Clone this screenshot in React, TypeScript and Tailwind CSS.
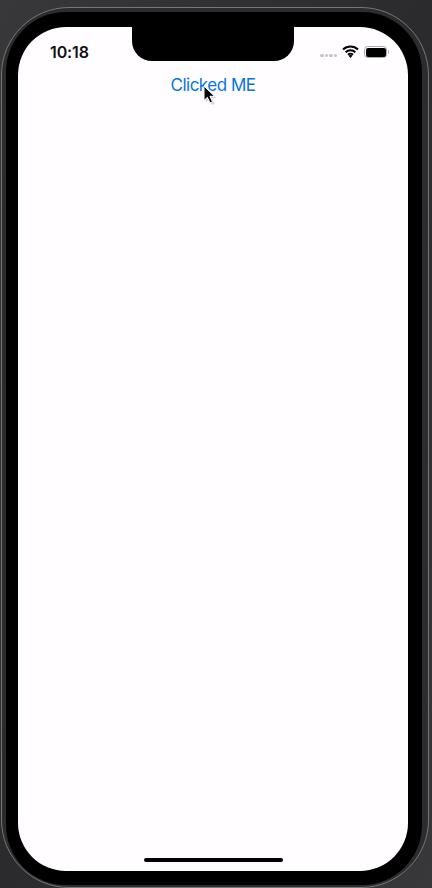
export default function App() {
  return (
    <div className="w-[432px] h-[888px] overflow-hidden bg-gradient-to-br from-[#38383a] via-[#2b2b2d] to-[#38383a] pt-[7px] pl-[1px]" style={{ fontFamily: "Inter, 'Liberation Sans', sans-serif" }}>
      <div className="w-[428px] h-[881px] rounded-[68px] border border-[#77777b] bg-[#2c2c2e] pt-[4px] pl-[4px] pr-[6px] pb-[1px]">
        <div className="w-[416px] h-[873px] rounded-[60px] bg-black pt-[15px] pl-[12px]">
          <div className="relative w-[390px] h-[844px] rounded-[48px] bg-[#fffdff] overflow-hidden flex flex-col items-center">
            <div className="absolute left-[114px] top-0 w-[162px] h-[34px] bg-black rounded-b-[20px]" />
            <div className="w-full h-[44px] shrink-0 flex items-center justify-between pl-[32px] pr-[19px] pt-[6px]">
              <span className="text-[16px] leading-[20px] font-semibold text-[#111] tracking-[-0.1px]">10:18</span>
              <div className="flex items-center gap-[5px]">
                <div className="flex gap-[1px] mt-[7px]">
                  <span className="w-[3.5px] h-[3.5px] rounded-full bg-[#c4c4c6]" />
                  <span className="w-[3.5px] h-[3.5px] rounded-full bg-[#c4c4c6]" />
                  <span className="w-[3.5px] h-[3.5px] rounded-full bg-[#c4c4c6]" />
                  <span className="w-[3.5px] h-[3.5px] rounded-full bg-[#c4c4c6]" />
                </div>
                <svg width="17" height="13" viewBox="0 0 16 12" className="-mt-[1px]">
                  <path d="M1 4.2a10 10 0 0 1 14 0M3.4 6.7a6.6 6.6 0 0 1 9.2 0M5.7 9a3.3 3.3 0 0 1 4.6 0" fill="none" stroke="#000" strokeWidth="1.9" />
                  <path d="M8 12l-1.8-2a2.5 2.5 0 0 1 3.6 0z" fill="#000" />
                </svg>
                <div className="flex items-center">
                  <div className="w-[23px] h-[12px] rounded-[3.5px] border-[1.5px] border-[#aaaaac] p-[0.5px]">
                    <div className="w-full h-full rounded-[2px] bg-black" />
                  </div>
                  <span className="w-[1.5px] h-[4px] rounded-r-full bg-[#aaaaac] ml-[0.5px]" />
                </div>
              </div>
            </div>
            <div className="relative mt-[3px]">
              <span className="block text-[17px] leading-[22px] tracking-[-0.5px] text-[#0a74da]">Clicked ME</span>
              <svg width="15" height="21" viewBox="0 0 15 21" className="absolute left-[31px] top-[11px]">
                <path d="M2.5 1.5l.4 14.5 3.4-3.2 2.6 5.7 2.5-1.1-2.6-5.6 4.7-.3z" fill="#b8b8ba" opacity="0.6" transform="translate(1 1.5)" />
                <path d="M2 1v14.5l3.4-3.2 2.6 5.7 2.5-1.1-2.6-5.6h4.7z" fill="#000" stroke="#fff" strokeWidth="1" />
              </svg>
            </div>
            <div className="mt-auto mb-[9px] w-[139px] h-[4px] rounded-full bg-black" />
          </div>
        </div>
      </div>
    </div>
  );
}
